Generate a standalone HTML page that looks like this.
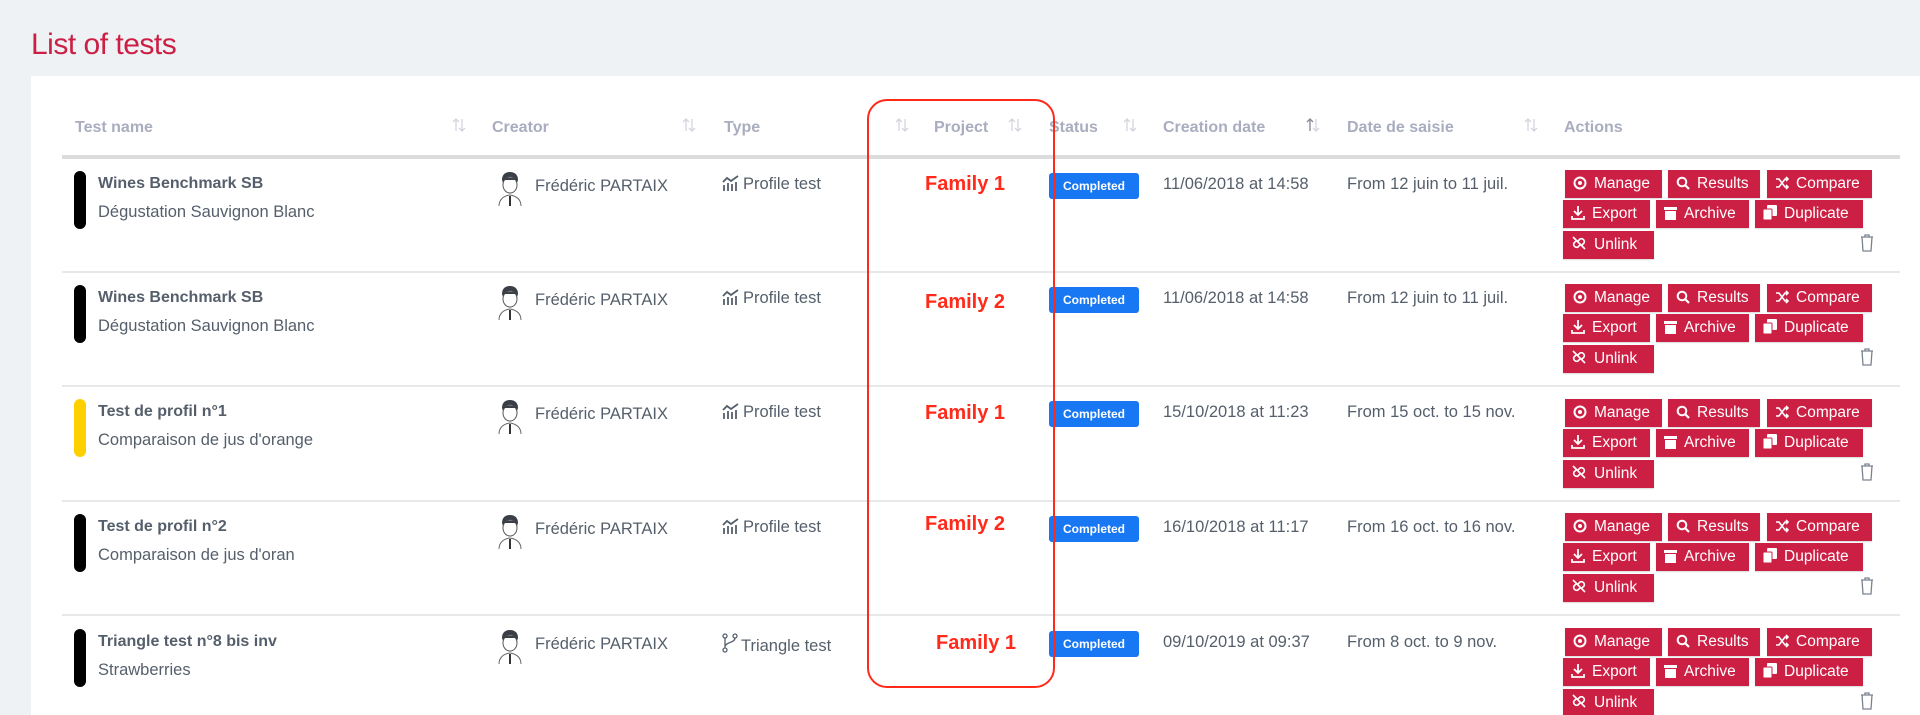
<!DOCTYPE html>
<html><head><meta charset="utf-8"><style>
*{margin:0;padding:0;box-sizing:border-box}
html,body{width:1920px;height:715px;overflow:hidden}
body{background:#eef2f5;font-family:"Liberation Sans",sans-serif;position:relative}
.title{position:absolute;left:31px;top:28px;font-size:30px;color:#cc1f44;letter-spacing:-0.5px}
.card{position:absolute;left:31px;top:76px;width:1889px;height:639px;background:#fff}
.h{position:absolute;top:119px;font-size:16px;font-weight:bold;color:#a9adbf}
.s{position:absolute;top:117px;width:14px;height:16px}
.hl{position:absolute;left:62px;top:155px;width:1838px;height:4px;background:#dcdcdc}
.sep{position:absolute;left:62px;width:1838px;height:2px;background:#e8e8e8}
.row{position:absolute;left:0;width:1920px;height:114px}
.bar{position:absolute;left:74px;top:13px;width:12px;height:58px;border-radius:6px;background:#000}
.nm{position:absolute;left:98px;top:17px;font-size:16px;font-weight:bold;color:#555f6b}
.sb{position:absolute;left:98px;top:45px;font-size:16.5px;color:#555f6b}
.av{position:absolute;left:497px;top:13px}
.cr{position:absolute;left:535px;top:19px;font-size:16.5px;color:#555f6b}
.ty{position:absolute;left:722px;top:17px;font-size:16.5px;color:#555f6b}
.ty svg{vertical-align:-2px;margin-right:3px}
.fam{position:absolute;font-size:20px;font-weight:bold;color:#ff2a1a}
.bd{position:absolute;left:1049px;top:15px;width:90px;height:26px;background:#1877f2;border-radius:3px;color:#fff;font-size:12px;font-weight:bold;text-align:center;line-height:26px}
.dt{position:absolute;left:1163px;top:17px;font-size:16.5px;color:#555f6b}
.ds{position:absolute;left:1347px;top:17px;font-size:16.5px;color:#555f6b}
.b{position:absolute;height:28px;background:#cc1f44;color:#fff;font-size:15.5px;line-height:28px;padding-left:8px;white-space:nowrap;overflow:hidden;box-shadow:0 1px 1px rgba(0,0,0,.15)}
.b svg{vertical-align:-2px;margin-right:7px}
.tr{position:absolute;left:1860px;top:76px}
.box{position:absolute;left:867px;top:99px;width:188px;height:589px;border:2px solid #ff2a1a;border-radius:20px}
.a1{left:1565px;width:97px}.a2{left:1668px;width:92px}.a3{left:1767px;width:105px}
.a4{left:1563px;width:87px}.a5{left:1656px;width:93px}.a6{left:1755px;width:108px}.a7{left:1563px;width:91px}
</style></head><body>
<div class="title">List of tests</div>
<div class="card"></div>
<div class="h" style="left:75px">Test name</div>
<div class="h" style="left:492px">Creator</div>
<div class="h" style="left:724px">Type</div>
<div class="h" style="left:934px">Project</div>
<div class="h" style="left:1049px">Status</div>
<div class="h" style="left:1163px">Creation date</div>
<div class="h" style="left:1347px">Date de saisie</div>
<div class="h" style="left:1564px">Actions</div>
<svg class="s" style="left:452px" viewBox="0 0 14 16"><path d="M4 14V2M1 5l3-3 3 3M10 2v12M7 11l3 3 3-3" fill="none" stroke="#d3d5de" stroke-width="1.3"/></svg>
<svg class="s" style="left:682px" viewBox="0 0 14 16"><path d="M4 14V2M1 5l3-3 3 3M10 2v12M7 11l3 3 3-3" fill="none" stroke="#d3d5de" stroke-width="1.3"/></svg>
<svg class="s" style="left:895px" viewBox="0 0 14 16"><path d="M4 14V2M1 5l3-3 3 3M10 2v12M7 11l3 3 3-3" fill="none" stroke="#d3d5de" stroke-width="1.3"/></svg>
<svg class="s" style="left:1008px" viewBox="0 0 14 16"><path d="M4 14V2M1 5l3-3 3 3M10 2v12M7 11l3 3 3-3" fill="none" stroke="#d3d5de" stroke-width="1.3"/></svg>
<svg class="s" style="left:1123px" viewBox="0 0 14 16"><path d="M4 14V2M1 5l3-3 3 3M10 2v12M7 11l3 3 3-3" fill="none" stroke="#d3d5de" stroke-width="1.3"/></svg>
<svg class="s" style="left:1306px" viewBox="0 0 14 16"><path d="M4 14V2M1 5l3-3 3 3" fill="none" stroke="#8a8e9c" stroke-width="1.4"/><path d="M10 2v12M7 11l3 3 3-3" fill="none" stroke="#d3d5de" stroke-width="1.3"/></svg>
<svg class="s" style="left:1524px" viewBox="0 0 14 16"><path d="M4 14V2M1 5l3-3 3 3M10 2v12M7 11l3 3 3-3" fill="none" stroke="#d3d5de" stroke-width="1.3"/></svg>
<div class="hl"></div>
<div class="sep" style="top:271px"></div>
<div class="sep" style="top:385px"></div>
<div class="sep" style="top:500px"></div>
<div class="sep" style="top:614px"></div>

<div class="row" style="top:158px">
<div class="bar"></div><div class="nm">Wines Benchmark SB</div><div class="sb">Dégustation Sauvignon Blanc</div>
<svg class="av" width="26" height="36" viewBox="0 0 26 36"><path d="M5 9c0-6 4-8 8-8s8 2 8 8l-1 3H6z" fill="#3a3f47"/><ellipse cx="13" cy="14" rx="7" ry="8" fill="#fff" stroke="#555" stroke-width="1"/><path d="M6 9c3-3 11-3 14 0" fill="#3a3f47"/><path d="M2 35c0-6 4-10 11-11 7 1 11 5 11 11" fill="#fff" stroke="#666"/><path d="M12 25h2v10h-2z" fill="#333"/></svg>
<div class="cr">Frédéric PARTAIX</div>
<div class="ty"><svg width="18" height="16" viewBox="0 0 18 16"><path d="M2 16V10M6 16V8M10 16V9M14 16V7M1 7l4-4 4 3 7-5" fill="none" stroke="#555f6b" stroke-width="1.8"/></svg>Profile test</div>
<div class="bd">Completed</div><div class="dt">11/06/2018 at 14:58</div><div class="ds">From 12 juin to 11 juil.</div>
</div>
<div class="fam" style="left:925px;top:173px">Family 1</div>

<div class="row" style="top:272px">
<div class="bar"></div><div class="nm">Wines Benchmark SB</div><div class="sb">Dégustation Sauvignon Blanc</div>
<svg class="av" width="26" height="36" viewBox="0 0 26 36"><path d="M5 9c0-6 4-8 8-8s8 2 8 8l-1 3H6z" fill="#3a3f47"/><ellipse cx="13" cy="14" rx="7" ry="8" fill="#fff" stroke="#555" stroke-width="1"/><path d="M6 9c3-3 11-3 14 0" fill="#3a3f47"/><path d="M2 35c0-6 4-10 11-11 7 1 11 5 11 11" fill="#fff" stroke="#666"/><path d="M12 25h2v10h-2z" fill="#333"/></svg>
<div class="cr">Frédéric PARTAIX</div>
<div class="ty"><svg width="18" height="16" viewBox="0 0 18 16"><path d="M2 16V10M6 16V8M10 16V9M14 16V7M1 7l4-4 4 3 7-5" fill="none" stroke="#555f6b" stroke-width="1.8"/></svg>Profile test</div>
<div class="bd">Completed</div><div class="dt">11/06/2018 at 14:58</div><div class="ds">From 12 juin to 11 juil.</div>
</div>
<div class="fam" style="left:925px;top:291px">Family 2</div>

<div class="row" style="top:386px">
<div class="bar" style="background:#ffd000"></div><div class="nm">Test de profil n°1</div><div class="sb">Comparaison de jus d'orange</div>
<svg class="av" width="26" height="36" viewBox="0 0 26 36"><path d="M5 9c0-6 4-8 8-8s8 2 8 8l-1 3H6z" fill="#3a3f47"/><ellipse cx="13" cy="14" rx="7" ry="8" fill="#fff" stroke="#555" stroke-width="1"/><path d="M6 9c3-3 11-3 14 0" fill="#3a3f47"/><path d="M2 35c0-6 4-10 11-11 7 1 11 5 11 11" fill="#fff" stroke="#666"/><path d="M12 25h2v10h-2z" fill="#333"/></svg>
<div class="cr">Frédéric PARTAIX</div>
<div class="ty"><svg width="18" height="16" viewBox="0 0 18 16"><path d="M2 16V10M6 16V8M10 16V9M14 16V7M1 7l4-4 4 3 7-5" fill="none" stroke="#555f6b" stroke-width="1.8"/></svg>Profile test</div>
<div class="bd">Completed</div><div class="dt">15/10/2018 at 11:23</div><div class="ds">From 15 oct. to 15 nov.</div>
</div>
<div class="fam" style="left:925px;top:402px">Family 1</div>

<div class="row" style="top:501px">
<div class="bar"></div><div class="nm">Test de profil n°2</div><div class="sb">Comparaison de jus d'oran</div>
<svg class="av" width="26" height="36" viewBox="0 0 26 36"><path d="M5 9c0-6 4-8 8-8s8 2 8 8l-1 3H6z" fill="#3a3f47"/><ellipse cx="13" cy="14" rx="7" ry="8" fill="#fff" stroke="#555" stroke-width="1"/><path d="M6 9c3-3 11-3 14 0" fill="#3a3f47"/><path d="M2 35c0-6 4-10 11-11 7 1 11 5 11 11" fill="#fff" stroke="#666"/><path d="M12 25h2v10h-2z" fill="#333"/></svg>
<div class="cr">Frédéric PARTAIX</div>
<div class="ty"><svg width="18" height="16" viewBox="0 0 18 16"><path d="M2 16V10M6 16V8M10 16V9M14 16V7M1 7l4-4 4 3 7-5" fill="none" stroke="#555f6b" stroke-width="1.8"/></svg>Profile test</div>
<div class="bd">Completed</div><div class="dt">16/10/2018 at 11:17</div><div class="ds">From 16 oct. to 16 nov.</div>
</div>
<div class="fam" style="left:925px;top:513px">Family 2</div>

<div class="row" style="top:615.5px">
<div class="bar"></div><div class="nm">Triangle test n°8 bis inv</div><div class="sb">Strawberries</div>
<svg class="av" width="26" height="36" viewBox="0 0 26 36"><path d="M5 9c0-6 4-8 8-8s8 2 8 8l-1 3H6z" fill="#3a3f47"/><ellipse cx="13" cy="14" rx="7" ry="8" fill="#fff" stroke="#555" stroke-width="1"/><path d="M6 9c3-3 11-3 14 0" fill="#3a3f47"/><path d="M2 35c0-6 4-10 11-11 7 1 11 5 11 11" fill="#fff" stroke="#666"/><path d="M12 25h2v10h-2z" fill="#333"/></svg>
<div class="cr">Frédéric PARTAIX</div>
<div class="ty"><svg width="16" height="20" viewBox="0 0 16 20"><circle cx="3" cy="3" r="2" fill="none" stroke="#555f6b" stroke-width="1.3"/><circle cx="13" cy="3" r="2" fill="none" stroke="#555f6b" stroke-width="1.3"/><circle cx="3" cy="17" r="2" fill="none" stroke="#555f6b" stroke-width="1.3"/><path d="M3 5v10M13 5c0 5-10 4-10 9" fill="none" stroke="#555f6b" stroke-width="1.3"/></svg>Triangle test</div>
<div class="bd">Completed</div><div class="dt">09/10/2019 at 09:37</div><div class="ds">From 8 oct. to 9 nov.</div>
</div>
<div class="fam" style="left:936px;top:632px">Family 1</div>

<div class="box"></div>

<div style="position:absolute;left:0;top:158px;width:1920px">
<div class="b a1" style="top:12px"><svg width="14" height="14" viewBox="0 0 14 14"><circle cx="7" cy="7" r="5.5" fill="none" stroke="#fff" stroke-width="2"/><circle cx="7" cy="7" r="2" fill="#fff"/></svg>Manage</div>
<div class="b a2" style="top:12px"><svg width="14" height="14" viewBox="0 0 14 14"><circle cx="6" cy="6" r="4.3" fill="none" stroke="#fff" stroke-width="2"/><path d="M9 9l4 4" stroke="#fff" stroke-width="2.2"/></svg>Results</div>
<div class="b a3" style="top:12px"><svg width="14" height="14" viewBox="0 0 14 14"><path d="M1 3h3l6 8h3M1 11h3l6-8h3M11 1l2 2-2 2M11 9l2 2-2 2" fill="none" stroke="#fff" stroke-width="1.6"/></svg>Compare</div>
<div class="b a4" style="top:42px"><svg width="14" height="15" viewBox="0 0 14 15"><path d="M7 1v9M3 6l4 4 4-4M1 11v3h12v-3" fill="none" stroke="#fff" stroke-width="1.8"/></svg>Export</div>
<div class="b a5" style="top:42px"><svg width="13" height="14" viewBox="0 0 13 14"><rect x="0" y="1" width="13" height="3" fill="#fff"/><rect x="1" y="5" width="11" height="9" fill="#fff"/></svg>Archive</div>
<div class="b a6" style="top:42px"><svg width="14" height="15" viewBox="0 0 14 15"><rect x="4" y="0" width="10" height="11" rx="1" fill="#fff"/><rect x="0" y="4" width="9" height="11" rx="1" fill="#fff" stroke="#cc1f44"/></svg>Duplicate</div>
<div class="b a7" style="top:73px"><svg width="16" height="16" viewBox="0 0 16 16"><path d="M6 5l-3 3a3 3 0 004 4l2-2M10 11l3-3a3 3 0 00-4-4L7 6M2 2l12 12" fill="none" stroke="#fff" stroke-width="1.6"/></svg>Unlink</div>
<svg class="tr" width="14" height="18" viewBox="0 0 14 18"><path d="M1 3h12M5 3V1h4v2M2 3l1 14h8l1-14" fill="none" stroke="#7a8290" stroke-width="1.3"/></svg>
</div>
<div style="position:absolute;left:0;top:272px;width:1920px">
<div class="b a1" style="top:12px"><svg width="14" height="14" viewBox="0 0 14 14"><circle cx="7" cy="7" r="5.5" fill="none" stroke="#fff" stroke-width="2"/><circle cx="7" cy="7" r="2" fill="#fff"/></svg>Manage</div>
<div class="b a2" style="top:12px"><svg width="14" height="14" viewBox="0 0 14 14"><circle cx="6" cy="6" r="4.3" fill="none" stroke="#fff" stroke-width="2"/><path d="M9 9l4 4" stroke="#fff" stroke-width="2.2"/></svg>Results</div>
<div class="b a3" style="top:12px"><svg width="14" height="14" viewBox="0 0 14 14"><path d="M1 3h3l6 8h3M1 11h3l6-8h3M11 1l2 2-2 2M11 9l2 2-2 2" fill="none" stroke="#fff" stroke-width="1.6"/></svg>Compare</div>
<div class="b a4" style="top:42px"><svg width="14" height="15" viewBox="0 0 14 15"><path d="M7 1v9M3 6l4 4 4-4M1 11v3h12v-3" fill="none" stroke="#fff" stroke-width="1.8"/></svg>Export</div>
<div class="b a5" style="top:42px"><svg width="13" height="14" viewBox="0 0 13 14"><rect x="0" y="1" width="13" height="3" fill="#fff"/><rect x="1" y="5" width="11" height="9" fill="#fff"/></svg>Archive</div>
<div class="b a6" style="top:42px"><svg width="14" height="15" viewBox="0 0 14 15"><rect x="4" y="0" width="10" height="11" rx="1" fill="#fff"/><rect x="0" y="4" width="9" height="11" rx="1" fill="#fff" stroke="#cc1f44"/></svg>Duplicate</div>
<div class="b a7" style="top:73px"><svg width="16" height="16" viewBox="0 0 16 16"><path d="M6 5l-3 3a3 3 0 004 4l2-2M10 11l3-3a3 3 0 00-4-4L7 6M2 2l12 12" fill="none" stroke="#fff" stroke-width="1.6"/></svg>Unlink</div>
<svg class="tr" width="14" height="18" viewBox="0 0 14 18"><path d="M1 3h12M5 3V1h4v2M2 3l1 14h8l1-14" fill="none" stroke="#7a8290" stroke-width="1.3"/></svg>
</div>
<div style="position:absolute;left:0;top:386.5px;width:1920px">
<div class="b a1" style="top:12px"><svg width="14" height="14" viewBox="0 0 14 14"><circle cx="7" cy="7" r="5.5" fill="none" stroke="#fff" stroke-width="2"/><circle cx="7" cy="7" r="2" fill="#fff"/></svg>Manage</div>
<div class="b a2" style="top:12px"><svg width="14" height="14" viewBox="0 0 14 14"><circle cx="6" cy="6" r="4.3" fill="none" stroke="#fff" stroke-width="2"/><path d="M9 9l4 4" stroke="#fff" stroke-width="2.2"/></svg>Results</div>
<div class="b a3" style="top:12px"><svg width="14" height="14" viewBox="0 0 14 14"><path d="M1 3h3l6 8h3M1 11h3l6-8h3M11 1l2 2-2 2M11 9l2 2-2 2" fill="none" stroke="#fff" stroke-width="1.6"/></svg>Compare</div>
<div class="b a4" style="top:42px"><svg width="14" height="15" viewBox="0 0 14 15"><path d="M7 1v9M3 6l4 4 4-4M1 11v3h12v-3" fill="none" stroke="#fff" stroke-width="1.8"/></svg>Export</div>
<div class="b a5" style="top:42px"><svg width="13" height="14" viewBox="0 0 13 14"><rect x="0" y="1" width="13" height="3" fill="#fff"/><rect x="1" y="5" width="11" height="9" fill="#fff"/></svg>Archive</div>
<div class="b a6" style="top:42px"><svg width="14" height="15" viewBox="0 0 14 15"><rect x="4" y="0" width="10" height="11" rx="1" fill="#fff"/><rect x="0" y="4" width="9" height="11" rx="1" fill="#fff" stroke="#cc1f44"/></svg>Duplicate</div>
<div class="b a7" style="top:73px"><svg width="16" height="16" viewBox="0 0 16 16"><path d="M6 5l-3 3a3 3 0 004 4l2-2M10 11l3-3a3 3 0 00-4-4L7 6M2 2l12 12" fill="none" stroke="#fff" stroke-width="1.6"/></svg>Unlink</div>
<svg class="tr" width="14" height="18" viewBox="0 0 14 18"><path d="M1 3h12M5 3V1h4v2M2 3l1 14h8l1-14" fill="none" stroke="#7a8290" stroke-width="1.3"/></svg>
</div>
<div style="position:absolute;left:0;top:501px;width:1920px">
<div class="b a1" style="top:12px"><svg width="14" height="14" viewBox="0 0 14 14"><circle cx="7" cy="7" r="5.5" fill="none" stroke="#fff" stroke-width="2"/><circle cx="7" cy="7" r="2" fill="#fff"/></svg>Manage</div>
<div class="b a2" style="top:12px"><svg width="14" height="14" viewBox="0 0 14 14"><circle cx="6" cy="6" r="4.3" fill="none" stroke="#fff" stroke-width="2"/><path d="M9 9l4 4" stroke="#fff" stroke-width="2.2"/></svg>Results</div>
<div class="b a3" style="top:12px"><svg width="14" height="14" viewBox="0 0 14 14"><path d="M1 3h3l6 8h3M1 11h3l6-8h3M11 1l2 2-2 2M11 9l2 2-2 2" fill="none" stroke="#fff" stroke-width="1.6"/></svg>Compare</div>
<div class="b a4" style="top:42px"><svg width="14" height="15" viewBox="0 0 14 15"><path d="M7 1v9M3 6l4 4 4-4M1 11v3h12v-3" fill="none" stroke="#fff" stroke-width="1.8"/></svg>Export</div>
<div class="b a5" style="top:42px"><svg width="13" height="14" viewBox="0 0 13 14"><rect x="0" y="1" width="13" height="3" fill="#fff"/><rect x="1" y="5" width="11" height="9" fill="#fff"/></svg>Archive</div>
<div class="b a6" style="top:42px"><svg width="14" height="15" viewBox="0 0 14 15"><rect x="4" y="0" width="10" height="11" rx="1" fill="#fff"/><rect x="0" y="4" width="9" height="11" rx="1" fill="#fff" stroke="#cc1f44"/></svg>Duplicate</div>
<div class="b a7" style="top:73px"><svg width="16" height="16" viewBox="0 0 16 16"><path d="M6 5l-3 3a3 3 0 004 4l2-2M10 11l3-3a3 3 0 00-4-4L7 6M2 2l12 12" fill="none" stroke="#fff" stroke-width="1.6"/></svg>Unlink</div>
<svg class="tr" width="14" height="18" viewBox="0 0 14 18"><path d="M1 3h12M5 3V1h4v2M2 3l1 14h8l1-14" fill="none" stroke="#7a8290" stroke-width="1.3"/></svg>
</div>
<div style="position:absolute;left:0;top:615.5px;width:1920px">
<div class="b a1" style="top:12px"><svg width="14" height="14" viewBox="0 0 14 14"><circle cx="7" cy="7" r="5.5" fill="none" stroke="#fff" stroke-width="2"/><circle cx="7" cy="7" r="2" fill="#fff"/></svg>Manage</div>
<div class="b a2" style="top:12px"><svg width="14" height="14" viewBox="0 0 14 14"><circle cx="6" cy="6" r="4.3" fill="none" stroke="#fff" stroke-width="2"/><path d="M9 9l4 4" stroke="#fff" stroke-width="2.2"/></svg>Results</div>
<div class="b a3" style="top:12px"><svg width="14" height="14" viewBox="0 0 14 14"><path d="M1 3h3l6 8h3M1 11h3l6-8h3M11 1l2 2-2 2M11 9l2 2-2 2" fill="none" stroke="#fff" stroke-width="1.6"/></svg>Compare</div>
<div class="b a4" style="top:42px"><svg width="14" height="15" viewBox="0 0 14 15"><path d="M7 1v9M3 6l4 4 4-4M1 11v3h12v-3" fill="none" stroke="#fff" stroke-width="1.8"/></svg>Export</div>
<div class="b a5" style="top:42px"><svg width="13" height="14" viewBox="0 0 13 14"><rect x="0" y="1" width="13" height="3" fill="#fff"/><rect x="1" y="5" width="11" height="9" fill="#fff"/></svg>Archive</div>
<div class="b a6" style="top:42px"><svg width="14" height="15" viewBox="0 0 14 15"><rect x="4" y="0" width="10" height="11" rx="1" fill="#fff"/><rect x="0" y="4" width="9" height="11" rx="1" fill="#fff" stroke="#cc1f44"/></svg>Duplicate</div>
<div class="b a7" style="top:73px"><svg width="16" height="16" viewBox="0 0 16 16"><path d="M6 5l-3 3a3 3 0 004 4l2-2M10 11l3-3a3 3 0 00-4-4L7 6M2 2l12 12" fill="none" stroke="#fff" stroke-width="1.6"/></svg>Unlink</div>
<svg class="tr" width="14" height="18" viewBox="0 0 14 18"><path d="M1 3h12M5 3V1h4v2M2 3l1 14h8l1-14" fill="none" stroke="#7a8290" stroke-width="1.3"/></svg>
</div>
</body></html>
